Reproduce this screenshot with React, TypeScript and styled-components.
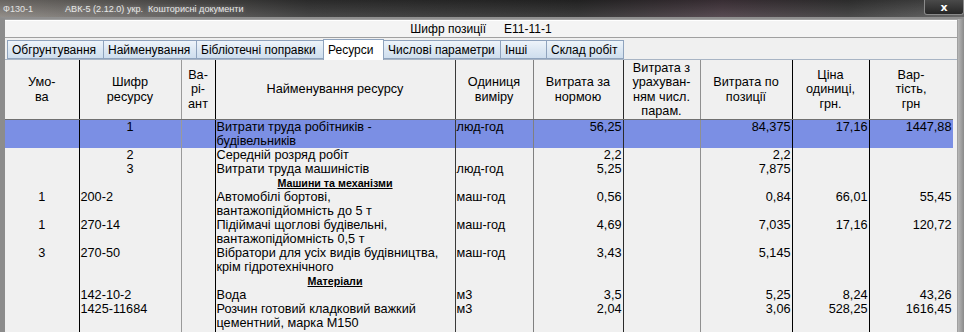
import React from 'react';
import styled, { createGlobalStyle } from 'styled-components';

const GlobalStyle = createGlobalStyle`
  html, body {
    margin: 0;
    padding: 0;
    background: #f0f0f0;
  }
  body {
    font-family: "Liberation Sans", Arial, sans-serif;
  }
`;

const Window = styled.div`
  width: 964px;
  height: 332px;
  overflow: hidden;
  display: flex;
  flex-direction: column;
  background: #7d7d7d;
`;

const TitleBar = styled.div`
  height: 17px;
  flex-shrink: 0;
  display: flex;
  align-items: center;
  position: relative;
  background:
    linear-gradient(180deg, rgba(0, 0, 0, 0.25) 0%, rgba(255, 255, 255, 0.08) 100%),
    linear-gradient(90deg, #8a8580 0%, #5c5a58 18%, #383838 32%, #2c2c2c 60%, #4a3c44 75%, #3a3a3a 88%, #5a5a5a 100%);
  color: #dcdcdc;
  font-size: 9.1px;
  white-space: nowrap;
`;

const TitleCode = styled.span`
  width: 62px;
  padding-left: 3px;
  color: #e2e2e2;
`;

const TitleText = styled.span`
  color: #e8e8e8;
  text-shadow: 0 0 4px rgba(255, 255, 255, 0.35);
`;

const CloseButton = styled.div`
  position: absolute;
  top: 0;
  right: 0;
  width: 40px;
  height: 15px;
  box-sizing: border-box;
  border: 1px solid #8a8a8a;
  border-top: none;
  border-radius: 0 0 3px 3px;
  background: linear-gradient(180deg, #4a4a4a 0%, #262626 100%);
  color: #fff;
  font: bold 11px "DejaVu Sans", sans-serif;
  display: flex;
  align-items: center;
  justify-content: center;
  line-height: 1;
`;

const Frame = styled.div`
  flex: 1;
  display: flex;
  min-height: 0;
  border-left: 5px solid #8c8c8c;
  border-top: 2px solid #8f8f8f;
`;

const Client = styled.div`
  flex: 1;
  display: flex;
  flex-direction: column;
  background: #f0f0f0;
  min-width: 0;
  border-right: 1px solid #a0a0a0;
`;

const RightEdge = styled.div`
  width: 6px;
  background: linear-gradient(90deg, #b8b8b8 0%, #8a8a8a 100%);
`;

const CodePanel = styled.div`
  height: 19px;
  flex-shrink: 0;
  box-sizing: border-box;
  border-top: 1px solid #a0a0a0;
  border-bottom: 1px solid #a0a0a0;
  box-shadow: inset 0 1px 0 #ffffff;
  display: flex;
  align-items: center;
  justify-content: center;
  gap: 18px;
  font-size: 12px;
  color: #000;
  background: #f4f4f4;
`;

const TabStrip = styled.div`
  height: 22px;
  flex-shrink: 0;
  display: flex;
  align-items: flex-end;
  padding-left: 2px;
  border-bottom: 1px solid #a8b4c4;
  box-sizing: border-box;
`;

const Tab = styled.div<{ $width: number; $active?: boolean }>`
  width: ${(p) => p.$width}px;
  height: ${(p) => (p.$active ? 21 : 19)}px;
  box-sizing: border-box;
  display: flex;
  align-items: center;
  padding-left: 4px;
  font-size: 12px;
  color: #000;
  white-space: nowrap;
  overflow: hidden;
  border: 1px solid #8fa3bd;
  border-bottom: ${(p) => (p.$active ? 'none' : '1px solid #8fa3bd')};
  margin-right: -1px;
  margin-bottom: ${(p) => (p.$active ? -1 : 0)}px;
  background: ${(p) =>
    p.$active ? '#ffffff' : 'linear-gradient(180deg, #eef4fa 0%, #dde8f3 50%, #cfdeee 100%)'};
  position: relative;
  z-index: ${(p) => (p.$active ? 1 : 0)};
`;

const GridWrap = styled.div`
  flex: 1;
  min-height: 0;
  overflow: hidden;
  width: 948px;
`;

const Table = styled.table`
  border-collapse: collapse;
  table-layout: fixed;
  width: 948px;
  font-size: 12.7px;
  color: #000;
`;

const HeadCell = styled.th<{ $line: string }>`
  height: 59px;
  padding: 0 2px;
  font-weight: normal;
  text-align: center;
  vertical-align: middle;
  line-height: 14.5px;
  white-space: pre-line;
  border-right: 1px solid ${(p) => p.$line};
  border-bottom: 1px solid #707070;
`;

const Row = styled.tr<{ $selected?: boolean }>`
  background: ${(p) => (p.$selected ? '#7b8fe4' : 'transparent')};
`;

const Cell = styled.td<{ $line: string; $align: 'left' | 'right' | 'center' }>`
  padding: 0 1px;
  line-height: 14px;
  height: 14px;
  vertical-align: top;
  text-align: ${(p) => p.$align};
  white-space: pre-line;
  overflow: hidden;
  border-right: 1px solid ${(p) => p.$line};
`;

const GroupTitle = styled.span`
  font-size: 10.7px;
  font-weight: bold;
  text-decoration: underline;
`;

const FillCell = styled.td<{ $line: string }>`
  border-right: 1px solid ${(p) => p.$line};
  height: 40px;
`;

type Col = { title: string; width: number; line: string; align: 'left' | 'right' | 'center' };

const columns: Col[] = [
  { title: 'Умо-\nва', width: 74, line: '#000000', align: 'center' },
  { title: 'Шифр\nресурсу', width: 102, line: '#9a9a9a', align: 'left' },
  { title: 'Ва-\nрі-\nант', width: 34, line: '#000000', align: 'left' },
  { title: 'Найменування ресурсу', width: 240, line: '#3a3a3a', align: 'left' },
  { title: 'Одиниця\nвиміру', width: 78, line: '#808080', align: 'left' },
  { title: 'Витрата за\nнормою', width: 90, line: '#2a2a2a', align: 'right' },
  { title: 'Витрата з\nурахуван-\nням числ.\nпарам.', width: 77, line: '#909090', align: 'right' },
  { title: 'Витрата по\nпозиції', width: 92, line: '#000000', align: 'right' },
  { title: 'Ціна\nодиниці,\nгрн.', width: 77, line: '#000000', align: 'right' },
  { title: 'Вар-\nтість,\nгрн', width: 84, line: '#909090', align: 'right' },
];

type DataRow = { kind: 'item'; cells: string[]; selected?: boolean; codeCenter?: boolean } | { kind: 'group'; title: string };

const rows: DataRow[] = [
  {
    kind: 'item',
    selected: true,
    codeCenter: true,
    cells: ['', '1', '', 'Витрати труда робітників -\nбудівельників', 'люд-год', '56,25', '', '84,375', '17,16', '1447,88'],
  },
  { kind: 'item', codeCenter: true, cells: ['', '2', '', 'Середній розряд робіт', '', '2,2', '', '2,2', '', ''] },
  { kind: 'item', codeCenter: true, cells: ['', '3', '', 'Витрати труда машиністів', 'люд-год', '5,25', '', '7,875', '', ''] },
  { kind: 'group', title: 'Машини та механізми' },
  {
    kind: 'item',
    cells: ['1', '200-2', '', 'Автомобілі бортові,\nвантажопідйомність до 5 т', 'маш-год', '0,56', '', '0,84', '66,01', '55,45'],
  },
  {
    kind: 'item',
    cells: ['1', '270-14', '', 'Підіймачі щоглові будівельні,\nвантажопідйомність 0,5 т', 'маш-год', '4,69', '', '7,035', '17,16', '120,72'],
  },
  {
    kind: 'item',
    cells: ['3', '270-50', '', 'Вібратори для усіх видів будівництва,\nкрім гідротехнічного', 'маш-год', '3,43', '', '5,145', '', ''],
  },
  { kind: 'group', title: 'Матеріали' },
  { kind: 'item', cells: ['', '142-10-2', '', 'Вода', 'м3', '3,5', '', '5,25', '8,24', '43,26'] },
  {
    kind: 'item',
    cells: ['', '1425-11684', '', 'Розчин готовий кладковий важкий\nцементний, марка М150', 'м3', '2,04', '', '3,06', '528,25', '1616,45'],
  },
];

const tabs = [
  { label: 'Обгрунтування', width: 97 },
  { label: 'Найменування', width: 94 },
  { label: 'Бібліотечні поправки', width: 128 },
  { label: 'Ресурси', width: 61, active: true },
  { label: 'Числові параметри', width: 118 },
  { label: 'Інші', width: 47 },
  { label: 'Склад робіт', width: 78 },
];

export default function App() {
  return (
    <>
      <GlobalStyle />
      <Window>
        <TitleBar>
          <TitleCode>Ф130-1</TitleCode>
          <TitleText>АВК-5 (2.12.0) укр.&nbsp; Кошторисні документи</TitleText>
          <CloseButton>x</CloseButton>
        </TitleBar>
        <Frame>
          <Client>
            <CodePanel>
              <span>Шифр позиції</span>
              <span>E11-11-1</span>
            </CodePanel>
            <TabStrip>
              {tabs.map((t) => (
                <Tab key={t.label} $width={t.width} $active={t.active}>
                  {t.label}
                </Tab>
              ))}
            </TabStrip>
            <GridWrap>
              <Table>
                <colgroup>
                  {columns.map((c, i) => (
                    <col key={i} style={{ width: c.width }} />
                  ))}
                </colgroup>
                <thead>
                  <tr>
                    {columns.map((c, i) => (
                      <HeadCell key={i} $line={c.line}>
                        {c.title}
                      </HeadCell>
                    ))}
                  </tr>
                </thead>
                <tbody>
                  {rows.map((r, ri) =>
                    r.kind === 'group' ? (
                      <Row key={ri}>
                        {columns.map((c, i) => (
                          <Cell key={i} $line={c.line} $align={i === 3 ? 'center' : c.align}>
                            {i === 3 ? <GroupTitle>{r.title}</GroupTitle> : ''}
                          </Cell>
                        ))}
                      </Row>
                    ) : (
                      <Row key={ri} $selected={r.selected}>
                        {r.cells.map((v, i) => (
                          <Cell
                            key={i}
                            $line={columns[i].line}
                            $align={i === 1 && r.codeCenter ? 'center' : columns[i].align}
                          >
                            {v}
                          </Cell>
                        ))}
                      </Row>
                    ),
                  )}
                  <tr>
                    {columns.map((c, i) => (
                      <FillCell key={i} $line={c.line} />
                    ))}
                  </tr>
                </tbody>
              </Table>
            </GridWrap>
          </Client>
          <RightEdge />
        </Frame>
      </Window>
    </>
  );
}
